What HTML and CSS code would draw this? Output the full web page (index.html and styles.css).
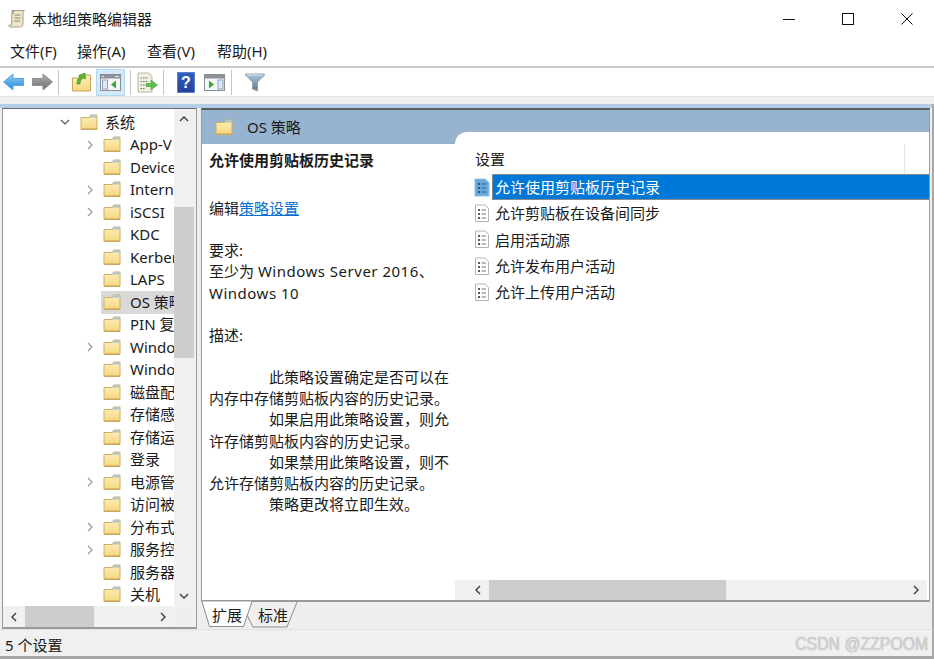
FILE: index.html
```html
<!DOCTYPE html>
<html lang="zh-CN">
<head>
<meta charset="utf-8">
<title>本地组策略编辑器</title>
<link rel="stylesheet" href="styles.css">
</head>
<body>
<svg class="defs" width="0" height="0" aria-hidden="true">
  <defs>
    <linearGradient id="fg" x1="0" y1="0" x2="0" y2="1"><stop offset="0" stop-color="#fdf0bb"/><stop offset="1" stop-color="#f6d67e"/></linearGradient>
    <linearGradient id="bl" x1="0" y1="0" x2="0" y2="1"><stop offset="0" stop-color="#8fd0f5"/><stop offset="1" stop-color="#1f86d8"/></linearGradient>
    <linearGradient id="gr" x1="0" y1="0" x2="0" y2="1"><stop offset="0" stop-color="#b0b0b0"/><stop offset="1" stop-color="#6f6f6f"/></linearGradient>
    <linearGradient id="fn" x1="0" y1="0" x2="0" y2="1"><stop offset="0" stop-color="#a9c4d8"/><stop offset="1" stop-color="#63788a"/></linearGradient>
    <linearGradient id="hp" x1="0" y1="0" x2="0" y2="1"><stop offset="0" stop-color="#2f62c0"/><stop offset="1" stop-color="#25409a"/></linearGradient>
    <symbol id="folder" viewBox="0 0 18 17">
      <path d="M1 3.500h8.500l1-2.500h6.500v14.500H1z" fill="url(#fg)" stroke="#cfae66"/>
      <path d="M11 1.500h5.500v2H10z" fill="#9cc4dc"/>
      <path d="M1.500 15h15.500" stroke="#c49f52"/>
    </symbol>
    <symbol id="doc" viewBox="0 0 16 19">
      <path d="M1.500 1h9.500l3.500 3.500v13H1.500z" fill="#fff" stroke="#b4b4b4"/>
      <path d="M4 6h2M4 10h2M4 14h2" stroke="#222" stroke-width="1.600"/>
      <path d="M7.500 6h4.500M7.500 10h4.500M7.500 14h4.500" stroke="#777"/>
    </symbol>
    <symbol id="docsel" viewBox="0 0 16 19">
      <path d="M1 1h10l4 3.500V18H1z" fill="#6aa8dc" stroke="#8dbfe6"/>
      <path d="M4 6h2M4 10h2M4 14h2" stroke="#123f6a" stroke-width="1.600"/>
      <path d="M7.500 6h4.500M7.500 10h4.500M7.500 14h4.500" stroke="#2b6498"/>
    </symbol>
    <symbol id="pane" viewBox="0 0 21 17">
      <rect x=".5" y=".5" width="20" height="16" fill="#f4f6f8" stroke="#8a8f94"/>
      <rect x="1" y="1" width="19" height="3.500" fill="#8b9299"/>
      <path d="M2 2.500h2M15 2.500h4" stroke="#e8e8e8"/>
      <rect x="2.500" y="6" width="5" height="9" fill="#dfe8f2" stroke="#8ba2bc"/>
    </symbol>
    <symbol id="right" viewBox="0 0 6 10"><path d="M1 1l4 4-4 4" fill="none" stroke="#999" stroke-width="1.200"/></symbol>
  </defs>
</svg>
<div class="window">
  <header class="titlebar">
    <div class="title-left">
      <svg class="app-icon" viewBox="0 0 18 19" width="18" height="19"><path d="M4 1.500h12.500c-1.500 1-1.500 3-1.500 5V15c0 1.500-1 3-2.500 3H2c-1 0-1.500-1-1-2h2.500z" fill="#efe6c8" stroke="#a8a088"/><path d="M4 1.500C6 1.500 6 4 4.500 5M6.500 6h6M6.500 9h6M6 12h6" stroke="#8f8a78" fill="none"/></svg>
      <span class="title-text">本地组策略编辑器</span>
    </div>
    <div class="win-controls">
      <svg width="12" height="12" viewBox="0 0 12 12"><path d="M0 6.500h12" stroke="#111"/></svg>
      <svg width="12" height="12" viewBox="0 0 12 12"><rect x=".5" y=".5" width="11" height="11" fill="none" stroke="#111"/></svg>
      <svg width="12" height="12" viewBox="0 0 12 12"><path d="M.5.500l11 11M11.500.500l-11 11" stroke="#111"/></svg>
    </div>
  </header>
  <nav class="menubar">
    <span class="menu-item first">文件(F)</span>
    <span class="menu-item">操作(A)</span>
    <span class="menu-item">查看(V)</span>
    <span class="menu-item">帮助(H)</span>
  </nav>
  <div class="toolbar">
    <span class="tool w-back"><svg width="21" height="18" viewBox="0 0 21 18"><path d="M.5 9L10 1v4.500h10.500v7H10V17z" fill="url(#bl)" stroke="#5ba7dc"/></svg></span>
    <span class="tool w-fwd"><svg width="21" height="18" viewBox="0 0 21 18"><path d="M20.500 9L11 1v4.500H.5v7H11V17z" fill="url(#gr)" stroke="#8f8f8f"/></svg></span>
    <span class="tool-sep sep-a"></span>
    <span class="tool w-up"><svg width="19" height="20" viewBox="0 0 19 20"><path d="M.5 6h6l2-3h10v16H.5z" fill="url(#fg)" stroke="#c6a55e"/><path d="M5 12c0-4 1-6 3-7L6.500 3.500 13 1l.5 6L11.500 6C9 7 8 9 8 12z" fill="#5fb52e" stroke="#3d8f1c" stroke-width=".6"/></svg></span>
    <span class="tool w-tree active"><svg width="21" height="17" viewBox="0 0 21 17"><use href="#pane"/><path d="M16 6.500v8l-5-4z" fill="#38a83c"/></svg></span>
    <span class="tool-sep sep-b"></span>
    <span class="tool w-exp"><svg width="21" height="21" viewBox="0 0 21 21"><path d="M1 1h11l3 3v16H1z" fill="#f3efdf" stroke="#b9b6a8"/><path d="M3.500 6h8M3.500 9.500h8M3.500 13h5M3.500 16.500h5" stroke="#6f6e66" stroke-dasharray="1.500 1"/><path d="M9 11.500h5V8l6.500 5-6.500 5v-3.500H9z" fill="#5dbf4c" stroke="#49a63a" stroke-width=".6"/></svg></span>
    <span class="tool-sep sep-c"></span>
    <span class="tool w-help"><svg width="18" height="21" viewBox="0 0 18 21"><rect x=".5" y=".5" width="17" height="20" fill="url(#hp)" stroke="#5f80cc"/><text x="9" y="16" class="help-mark">?</text></svg></span>
    <span class="tool w-act"><svg width="21" height="17" viewBox="0 0 21 17"><rect x=".5" y=".5" width="20" height="16" fill="#f4f6f8" stroke="#8a8f94"/><rect x="1" y="1" width="19" height="3.500" fill="#8b9299"/><rect x="14" y="6" width="5" height="9" fill="#dfe8f2" stroke="#8ba2bc"/><path d="M5 6.500v8l5-4z" fill="#38a83c"/></svg></span>
    <span class="tool-sep sep-d"></span>
    <span class="tool w-filter"><svg width="20" height="19" viewBox="0 0 20 19"><path d="M.5 1h19c0 1-.5 2-1.500 2.500L12.500 9v9l-5-2V9L2 3.500C1 3 .5 2 .5 1z" fill="url(#fn)" stroke="#8aa0b0"/><path d="M2 2h16" stroke="#d8e6ef"/></svg></span>
  </div>
  <div class="band-gray"></div>
  <div class="band-blue"></div>
  <main class="main">
    <section class="tree-pane">
      <div class="tree-top">
        <div class="tree">
          <div class="row l0"><span class="slot"><svg class="chev" width="10" height="6" viewBox="0 0 10 6"><path d="M1 1l4 4 4-4" fill="none" stroke="#555" stroke-width="1.200"/></svg></span><span class="body"><svg class="fold" width="18" height="17"><use href="#folder"/></svg><span class="lab">系统</span></span></div>
          <div class="row l1"><span class="slot"><svg class="chev" width="6" height="10"><use href="#right"/></svg></span><span class="body"><svg class="fold" width="18" height="17"><use href="#folder"/></svg><span class="lab">App-V</span></span></div>
          <div class="row l1"><span class="slot"></span><span class="body"><svg class="fold" width="18" height="17"><use href="#folder"/></svg><span class="lab">Device</span></span></div>
          <div class="row l1"><span class="slot"><svg class="chev" width="6" height="10"><use href="#right"/></svg></span><span class="body"><svg class="fold" width="18" height="17"><use href="#folder"/></svg><span class="lab">Interne</span></span></div>
          <div class="row l1"><span class="slot"><svg class="chev" width="6" height="10"><use href="#right"/></svg></span><span class="body"><svg class="fold" width="18" height="17"><use href="#folder"/></svg><span class="lab">iSCSI</span></span></div>
          <div class="row l1"><span class="slot"></span><span class="body"><svg class="fold" width="18" height="17"><use href="#folder"/></svg><span class="lab">KDC</span></span></div>
          <div class="row l1"><span class="slot"></span><span class="body"><svg class="fold" width="18" height="17"><use href="#folder"/></svg><span class="lab">Kerber</span></span></div>
          <div class="row l1"><span class="slot"></span><span class="body"><svg class="fold" width="18" height="17"><use href="#folder"/></svg><span class="lab">LAPS</span></span></div>
          <div class="row l1 sel"><span class="slot"></span><span class="body"><svg class="fold" width="18" height="17"><use href="#folder"/></svg><span class="lab">OS 策略</span></span></div>
          <div class="row l1"><span class="slot"></span><span class="body"><svg class="fold" width="18" height="17"><use href="#folder"/></svg><span class="lab">PIN 复</span></span></div>
          <div class="row l1"><span class="slot"><svg class="chev" width="6" height="10"><use href="#right"/></svg></span><span class="body"><svg class="fold" width="18" height="17"><use href="#folder"/></svg><span class="lab">Windo</span></span></div>
          <div class="row l1"><span class="slot"></span><span class="body"><svg class="fold" width="18" height="17"><use href="#folder"/></svg><span class="lab">Windo</span></span></div>
          <div class="row l1"><span class="slot"></span><span class="body"><svg class="fold" width="18" height="17"><use href="#folder"/></svg><span class="lab">磁盘配</span></span></div>
          <div class="row l1"><span class="slot"></span><span class="body"><svg class="fold" width="18" height="17"><use href="#folder"/></svg><span class="lab">存储感</span></span></div>
          <div class="row l1"><span class="slot"></span><span class="body"><svg class="fold" width="18" height="17"><use href="#folder"/></svg><span class="lab">存储运</span></span></div>
          <div class="row l1"><span class="slot"></span><span class="body"><svg class="fold" width="18" height="17"><use href="#folder"/></svg><span class="lab">登录</span></span></div>
          <div class="row l1"><span class="slot"><svg class="chev" width="6" height="10"><use href="#right"/></svg></span><span class="body"><svg class="fold" width="18" height="17"><use href="#folder"/></svg><span class="lab">电源管</span></span></div>
          <div class="row l1"><span class="slot"></span><span class="body"><svg class="fold" width="18" height="17"><use href="#folder"/></svg><span class="lab">访问被</span></span></div>
          <div class="row l1"><span class="slot"><svg class="chev" width="6" height="10"><use href="#right"/></svg></span><span class="body"><svg class="fold" width="18" height="17"><use href="#folder"/></svg><span class="lab">分布式</span></span></div>
          <div class="row l1"><span class="slot"><svg class="chev" width="6" height="10"><use href="#right"/></svg></span><span class="body"><svg class="fold" width="18" height="17"><use href="#folder"/></svg><span class="lab">服务控</span></span></div>
          <div class="row l1"><span class="slot"></span><span class="body"><svg class="fold" width="18" height="17"><use href="#folder"/></svg><span class="lab">服务器</span></span></div>
          <div class="row l1"><span class="slot"></span><span class="body"><svg class="fold" width="18" height="17"><use href="#folder"/></svg><span class="lab">关机</span></span></div>
        </div>
        <div class="vbar">
          <span class="arrow-box"><svg width="10" height="6" viewBox="0 0 10 6"><path d="M1 5l4-4 4 4" fill="none" stroke="#444" stroke-width="1.500"/></svg></span>
          <div class="vtrack"><div class="vthumb"></div></div>
          <span class="arrow-box"><svg width="10" height="6" viewBox="0 0 10 6"><path d="M1 1l4 4 4-4" fill="none" stroke="#444" stroke-width="1.500"/></svg></span>
        </div>
      </div>
      <div class="hbar hbar-left">
        <span class="arrow-side"><svg width="6" height="10" viewBox="0 0 6 10"><path d="M5 1L1 5l4 4" fill="none" stroke="#444" stroke-width="1.500"/></svg></span>
        <div class="htrack"><div class="hthumb thumb-left"></div></div>
        <span class="arrow-side"><svg width="6" height="10" viewBox="0 0 6 10"><path d="M1 1l4 4-4 4" fill="none" stroke="#444" stroke-width="1.500"/></svg></span>
      </div>
    </section>
    <div class="right-col">
      <section class="content-pane">
        <div class="content-head">
          <svg class="fold" width="18" height="17"><use href="#folder"/></svg>
          <span class="head-title">OS 策略</span>
        </div>
        <div class="content-body">
          <article class="detail">
            <h1 class="detail-title">允许使用剪贴板历史记录</h1>
            <p class="para">编辑<a class="link">策略设置</a></p>
            <p class="para gap">要求:<br>至少为 <span class="latin">Windows Server 2016</span>、<br><span class="latin">Windows 10</span></p>
            <p class="para gap">描述:</p>
            <div class="desc">
              <p class="para ind">此策略设置确定是否可以在内存中存储剪贴板内容的历史记录。</p>
              <p class="para ind">如果启用此策略设置，则允许存储剪贴板内容的历史记录。</p>
              <p class="para ind">如果禁用此策略设置，则不允许存储剪贴板内容的历史记录。</p>
              <p class="para ind">策略更改将立即生效。</p>
            </div>
          </article>
          <div class="list-pane">
            <div class="list-head"><span class="col-name">设置</span><span class="col-sep"></span></div>
            <ul class="list">
              <li class="item selected"><svg width="16" height="19"><use href="#docsel"/></svg><span class="item-text">允许使用剪贴板历史记录</span></li>
              <li class="item"><svg width="16" height="19"><use href="#doc"/></svg><span class="item-text">允许剪贴板在设备间同步</span></li>
              <li class="item"><svg width="16" height="19"><use href="#doc"/></svg><span class="item-text">启用活动源</span></li>
              <li class="item"><svg width="16" height="19"><use href="#doc"/></svg><span class="item-text">允许发布用户活动</span></li>
              <li class="item"><svg width="16" height="19"><use href="#doc"/></svg><span class="item-text">允许上传用户活动</span></li>
            </ul>
            <div class="hbar hbar-right">
              <span class="arrow-side"><svg width="6" height="10" viewBox="0 0 6 10"><path d="M5 1L1 5l4 4" fill="none" stroke="#444" stroke-width="1.500"/></svg></span>
              <div class="htrack"><div class="hthumb thumb-right"></div></div>
              <span class="arrow-side"><svg width="6" height="10" viewBox="0 0 6 10"><path d="M1 1l4 4-4 4" fill="none" stroke="#444" stroke-width="1.500"/></svg></span>
            </div>
          </div>
        </div>
      </section>
      <div class="tabs">
        <svg class="tab-shapes" width="110" height="27" viewBox="0 0 110 27">
          <path d="M46 14l6 12h34l10-25" fill="#f0f0f0" stroke="#8c8c8c"/>
          <path d="M1 .5L8.500 25.500h34L51 .5" fill="#fff" stroke="#8c8c8c"/>
        </svg>
        <span class="tab tab-a">扩展</span>
        <span class="tab tab-b">标准</span>
      </div>
    </div>
  </main>
  <footer class="status">
    <span class="status-text">5 个设置</span>
    <span class="watermark">CSDN @ZZPOOM</span>
  </footer>
</div>
</body>
</html>
```
FILE: styles.css
```css
* { box-sizing: border-box; }
html, body { margin: 0; padding: 0; }
body {
  width: 934px;
  height: 659px;
  overflow: hidden;
  background: #fff;
  color: #1a1a1a;
  font-family: "Noto Sans", "Noto Sans CJK SC", sans-serif;
  font-size: 15px;
}
.defs { position: absolute; }
.window { display: flex; flex-direction: column; width: 934px; height: 659px; }

.titlebar { display: flex; justify-content: space-between; align-items: center; height: 37px; flex: none; }
.title-left { display: flex; align-items: center; padding-left: 8px; }
.app-icon { margin-right: 6px; flex: none; }
.title-text { font-size: 15px; line-height: 20px; }
.win-controls { display: flex; gap: 47px; padding-right: 21px; align-items: center; }

.menubar { display: flex; flex: none; height: 31px; padding: 0 0 2px 10px; border-bottom: 2px solid #c8c8c8; align-items: center; gap: 20px; }
.menu-item { width: 50px; white-space: nowrap; font-size: 15px; line-height: 26px; }
.first { width: 47px; }

.toolbar { display: flex; flex: none; height: 28px; align-items: center; background: #fff; }
.tool { display: flex; align-items: center; justify-content: center; height: 27px; flex: none; }
.tool-sep { width: 1px; height: 25px; background: #c4c4c4; flex: none; }
.w-back { width: 21px; margin-left: 3px; }
.w-fwd { width: 21px; margin-left: 8px; }
.sep-a { margin-left: 5px; }
.w-up { width: 19px; margin-left: 13px; }
.w-tree { width: 29px; margin-left: 5px; }
.active { background: #d4e8f8; border: 1px solid #b0d8f8; }
.sep-b { margin-left: 5px; }
.w-exp { width: 21px; margin-left: 6px; }
.sep-c { margin-left: 5px; }
.w-help { width: 18px; margin-left: 13px; }
.w-act { width: 21px; margin-left: 9px; }
.sep-d { margin-left: 6px; }
.w-filter { width: 20px; margin-left: 13px; }
.help-mark { fill: #fff; font-family: "Liberation Sans", sans-serif; font-weight: 700; font-size: 16px; text-anchor: middle; }

.band-gray { height: 8px; flex: none; background: #f0f0f0; border-top: 1px solid #e4e4e4; }
.band-blue { height: 4px; flex: none; background: #b5cde6; border-right: 2px solid #a8a8a8; }

.main { display: flex; flex: none; height: 521px; background: #eeeeee; padding-left: 2px; border-right: 2px solid #a8a8a8; }

.tree-pane { display: flex; flex-direction: column; width: 195px; height: 521px; flex: none; border: 1px solid #9a9a9a; border-top-color: #6a6a6a; border-bottom-width: 2px; background: #efefef; }
.tree-top { display: flex; height: 497px; flex: none; }
.tree { width: 171px; flex: none; height: 497px; padding-top: 2px; overflow: hidden; background: #fff; }
.row { display: flex; align-items: center; height: 22.5px; white-space: nowrap; line-height: 22px; }
.l0 { padding-left: 57px; }
.l0 .slot { width: 20px; }
.l0 .body { padding-left: 0; }
.l0 .lab { margin-left: 7px; }
.l1 { padding-left: 81px; }
.slot { display: flex; align-items: center; width: 17px; flex: none; height: 100%; }
.chev { flex: none; }
.fold { flex: none; }
.l1 .chev { margin-left: 3px; }
.body { display: flex; align-items: center; flex: 1; min-width: 0; height: 100%; padding-left: 2px; overflow: hidden; }
.lab { margin-left: 9px; position: relative; top: -0.5px; }
.sel .body { background: #d9d9d9; }

.vbar { display: flex; flex-direction: column; width: 20px; flex: none; height: 497px; background: #f0f0f0; }
.arrow-box { display: flex; align-items: center; justify-content: center; height: 20px; flex: none; }
.vtrack { flex: 1; padding-top: 78px; }
.vthumb { height: 151px; background: #cdcdcd; }

.hbar { display: flex; align-items: center; flex: none; height: 21px; background: #f0f0f0; }
.arrow-side { display: flex; align-items: center; justify-content: center; width: 22px; flex: none; height: 100%; }
.htrack { flex: 1; height: 100%; }
.hthumb { height: 100%; background: #cdcdcd; }
.thumb-left { width: 69px; }
.hbar-left { width: 171px; }
.thumb-right { width: 237px; }

.right-col { display: flex; flex-direction: column; width: 729px; flex: none; margin-left: 4px; }
.content-pane { display: flex; flex-direction: column; height: 494px; flex: none; border: 1px solid #9a9a9a; border-top: 2px solid #5c5c5c; border-right-width: 1px; border-bottom-width: 2px; background: #fff; }
.content-head { display: flex; align-items: center; height: 34px; flex: none; padding: 0 0 0 13px; background: #98b3d0; }
.head-title { margin-left: 14px; font-size: 15px; line-height: 20px; }
.content-body { display: flex; flex: 1; min-height: 0; }

.detail { width: 253px; flex: none; padding: 6px 0 0 7px; }
.detail-title { margin: 0 0 27px; font-size: 15px; font-weight: 700; line-height: 21px; white-space: nowrap; }
.para { margin: 0; width: 242px; font-size: 15px; line-height: 21.2px; }
.gap { margin-top: 21px; }
.desc { margin-top: 21px; }
.ind { text-indent: 60px; }
.link { color: #0a6fd0; text-decoration: underline; }
.latin { letter-spacing: .5px; }

.list-pane { display: flex; flex-direction: column; width: 474px; flex: none; margin-top: -12px; background: #fff; border-top-left-radius: 12px; }
.list-head { display: flex; justify-content: space-between; height: 42px; flex: none; padding: 12px 24px 0 20px; }
.col-name { line-height: 30px; }
.col-sep { width: 1px; height: 30px; background: #e5e5e5; }
.list { list-style: none; margin: 0; padding: 0; flex: 1; min-height: 0; }
.item { display: flex; align-items: center; height: 26.3px; padding-left: 19px; white-space: nowrap; }
.item svg { flex: none; }
.item-text { flex: 1; height: 100%; margin-left: 2px; padding-left: 3px; line-height: 26px; }
.selected .item-text { color: #fff; background: #0078d7; border: 1px solid #8a8a8a; border-right: 0; padding-left: 2px; line-height: 24px; }
.hbar-right { width: 472px; margin-bottom: 0; padding-left: 12px; height: 20px; }
.hbar-right .arrow-side { width: 22px; }

.tabs { position: relative; display: flex; height: 27px; flex: none; }
.tab-shapes { position: absolute; left: 0; top: -1px; }
.tab { position: relative; font-size: 15px; line-height: 26px; }
.tab-a { margin-left: 11px; }
.tab-b { margin-left: 16px; }

.status { display: flex; justify-content: space-between; align-items: center; flex: 1; padding: 3px 4px 0 5px; background: #f0f0f0; border-top: 1px solid #e2e2e2; border-right: 2px solid #a8a8a8; border-bottom: 3px solid #a6a6a6; }
.status-text { font-size: 15px; line-height: 20px; }
.watermark { font-family: "Liberation Sans", sans-serif; font-size: 18px; color: #d4d4d4; text-shadow: 0 0 1px #a0a0a0; white-space: nowrap; transform: scaleX(.88); transform-origin: right center; }
```
